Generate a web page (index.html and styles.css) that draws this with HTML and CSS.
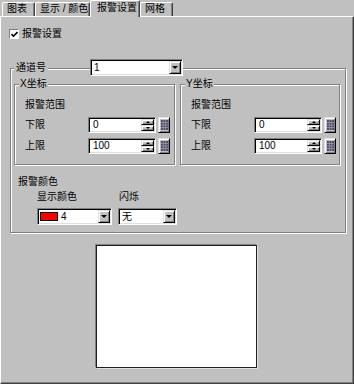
FILE: index.html
```html
<!DOCTYPE html>
<html>
<head lang="zh">
    <meta charset="UTF-8">
    <title>报警设置</title>
    <link rel="stylesheet" href="styles.css">
</head>
<body>
<div id="tabs">
    <div class="tab tab-chart">图表</div>
    <div class="tab tab-color">显示 / 颜色</div>
    <div class="tab tab-alarm active">报警设置</div>
    <div class="tab tab-grid">网格</div>
</div>
<div id="panel">
    <div class="check">
        <span class="check-box">
            <svg width="7" height="7" viewBox="0 0 7 7"><path d="M0.5 3 L2.5 5.2 L6.5 1" fill="none" stroke="#000" stroke-width="1.6"/></svg>
        </span>
        <span>报警设置</span>
    </div>

    <div class="group outer">
        <div class="head">
            <span class="legend">通道号</span>
            <div class="combo channel"><span class="combo-text">1</span><span class="btn drop"></span></div>
        </div>

        <div class="axes">
            <div class="group axis axis-x">
                <span class="legend">X坐标</span>
                <div class="caption">报警范围</div>
                <div class="row first">
                    <span class="row-label">下限</span>
                    <div class="field"><span class="field-text">0</span><span class="spin"><i class="btn up"></i><i class="btn down"></i></span></div>
                    <span class="btn keypad"><svg width="7" height="10" viewBox="0 0 7 10"><rect width="7" height="10" fill="#4a4a66"/><path d="M0 2.5H7M0 5H7M0 7.5H7M2.3 0V10M4.7 0V10" stroke="#9a9ab4" stroke-width="0.8"/></svg></span>
                </div>
                <div class="row">
                    <span class="row-label">上限</span>
                    <div class="field"><span class="field-text">100</span><span class="spin"><i class="btn up"></i><i class="btn down"></i></span></div>
                    <span class="btn keypad"><svg width="7" height="10" viewBox="0 0 7 10"><rect width="7" height="10" fill="#4a4a66"/><path d="M0 2.5H7M0 5H7M0 7.5H7M2.3 0V10M4.7 0V10" stroke="#9a9ab4" stroke-width="0.8"/></svg></span>
                </div>
            </div>

            <div class="group axis axis-y">
                <span class="legend">Y坐标</span>
                <div class="caption">报警范围</div>
                <div class="row first">
                    <span class="row-label">下限</span>
                    <div class="field"><span class="field-text">0</span><span class="spin"><i class="btn up"></i><i class="btn down"></i></span></div>
                    <span class="btn keypad"><svg width="7" height="10" viewBox="0 0 7 10"><rect width="7" height="10" fill="#4a4a66"/><path d="M0 2.5H7M0 5H7M0 7.5H7M2.3 0V10M4.7 0V10" stroke="#9a9ab4" stroke-width="0.8"/></svg></span>
                </div>
                <div class="row">
                    <span class="row-label">上限</span>
                    <div class="field"><span class="field-text">100</span><span class="spin"><i class="btn up"></i><i class="btn down"></i></span></div>
                    <span class="btn keypad"><svg width="7" height="10" viewBox="0 0 7 10"><rect width="7" height="10" fill="#4a4a66"/><path d="M0 2.5H7M0 5H7M0 7.5H7M2.3 0V10M4.7 0V10" stroke="#9a9ab4" stroke-width="0.8"/></svg></span>
                </div>
            </div>
        </div>

        <div class="alarm-color">
            <div class="caption">报警颜色</div>
            <div class="color-row">
                <div class="color-col show">
                    <div class="col-label">显示颜色</div>
                    <div class="combo"><span class="swatch"></span><span class="combo-text">4</span><span class="btn drop"></span></div>
                </div>
                <div class="color-col blink">
                    <div class="col-label">闪烁</div>
                    <div class="combo"><span class="combo-text">无</span><span class="btn drop"></span></div>
                </div>
            </div>
        </div>
    </div>

    <div class="preview"></div>
</div>
</body>
</html>
```

FILE: styles.css
```css
* {
    margin: 0;
    padding: 0;
    box-sizing: border-box;
}

body {
    width: 354px;
    height: 384px;
    overflow: hidden;
    background: #c0c0c0;
    font-family: "Liberation Sans", "Noto Sans CJK SC", sans-serif;
    font-size: 10px;
    line-height: 12px;
    color: #000;
}

/* tabs */
#tabs {
    position: relative;
    z-index: 1;
    display: flex;
    align-items: flex-end;
    height: 16px;
    padding-left: 2px;
}

.tab {
    height: 14px;
    padding-left: 4px;
    border: 1px solid #fff;
    border-right-color: #404040;
    border-bottom: none;
    border-radius: 2px 2px 0 0;
    box-shadow: inset -1px 0 #808080;
    white-space: nowrap;
}

.tab-chart { width: 33px; }
.tab-color { width: 55px; }
.tab-alarm { width: 50px; }
.tab-grid { width: 33px; }

.tab.active {
    height: 17px;
    margin-bottom: -1px;
    padding: 1px 0 0 6px;
    background: #c0c0c0;
}

/* page */
#panel {
    height: 368px;
    padding-top: 12px;
    border: 1px solid;
    border-color: #fff #404040 #404040 #fff;
    box-shadow: inset -1px -1px #808080;
}

.check {
    display: flex;
    align-items: center;
    height: 10px;
    margin-left: 8px;
}

.check-box {
    display: flex;
    align-items: center;
    justify-content: center;
    width: 10px;
    height: 10px;
    margin-right: 3px;
    background: #fff;
    border: 1px solid;
    border-color: #808080 #fff #fff #808080;
}

/* etched group boxes */
.group {
    border: 1px solid #808080;
    box-shadow: inset 1px 1px #fff, 1px 1px #fff;
}

.legend {
    justify-self: start;
    padding: 0 2px;
    background: #c0c0c0;
}

.outer {
    width: 336px;
    height: 165px;
    margin: 29px 0 0 9px;
}

.head {
    display: grid;
    grid-template-columns: 76px 93px;
    align-items: center;
    height: 17px;
    margin-top: -10px;
    padding-left: 3px;
}

.axes {
    display: flex;
    gap: 5px;
    margin: 8px 0 0 3px;
}

.axis {
    display: flex;
    flex-direction: column;
    align-items: flex-start;
    height: 81px;
    padding-left: 10px;
}

.axis-x { width: 161px; }
.axis-y { width: 160px; }

.axis .legend {
    margin: -7px 0 0 -6px;
    padding: 0 1px;
}

.axis .caption {
    margin-top: 9px;
}

.row {
    display: flex;
    align-items: center;
    height: 16px;
    margin-top: 5px;
}

.row.first {
    margin-top: 6px;
}

.row-label {
    width: 63px;
}

/* controls */
.combo, .field {
    display: flex;
    align-items: center;
    background: #fff;
    border: 1px solid;
    border-color: #808080 #fff #fff #808080;
    box-shadow: inset 1px 1px #000, inset -1px -1px #dfdfdf;
    padding: 1px;
}

.combo {
    height: 17px;
}

.combo-text {
    flex: 1;
    padding-left: 2px;
    white-space: nowrap;
}

.btn {
    display: flex;
    align-items: center;
    justify-content: center;
    background: #c0c0c0;
    border: 1px solid;
    border-color: #dfdfdf #000 #000 #dfdfdf;
    box-shadow: inset 1px 1px #fff, inset -1px -1px #808080;
}

.drop {
    width: 12px;
    height: 13px;
}

.drop::after {
    content: "";
    border-left: 3px solid transparent;
    border-right: 3px solid transparent;
    border-top: 3px solid #000;
}

.field {
    width: 68px;
    height: 16px;
}

.field-text {
    flex: 1;
    padding-left: 3px;
}

.spin {
    display: flex;
    flex-direction: column;
    width: 13px;
    height: 12px;
}

.spin i {
    flex: 1;
}

.spin .up::after {
    content: "";
    border-left: 2px solid transparent;
    border-right: 2px solid transparent;
    border-bottom: 2px solid #000;
}

.spin .down::after {
    content: "";
    border-left: 2px solid transparent;
    border-right: 2px solid transparent;
    border-top: 2px solid #000;
}

.keypad {
    width: 12px;
    height: 16px;
    margin-left: 2px;
}

/* colour section */
.alarm-color {
    margin: 11px 0 0 7px;
}

.color-row {
    display: flex;
    gap: 6px;
    margin: 3px 0 0 19px;
}

.color-col.show { width: 75px; }
.color-col.blink { width: 59px; }

.blink .col-label {
    padding-left: 1px;
}

.color-col .combo {
    margin-top: 5px;
}

.swatch {
    width: 18px;
    height: 9px;
    margin-left: 1px;
    background: #f00;
    border: 1px solid #000;
}

.show .combo-text {
    padding-left: 3px;
}

.preview {
    width: 161px;
    height: 123px;
    margin: 12px 0 0 95px;
    background: #fff;
    border: 1px solid #202020;
    box-shadow: -1px -1px #808080, 1px 1px #dfdfdf;
}
```
